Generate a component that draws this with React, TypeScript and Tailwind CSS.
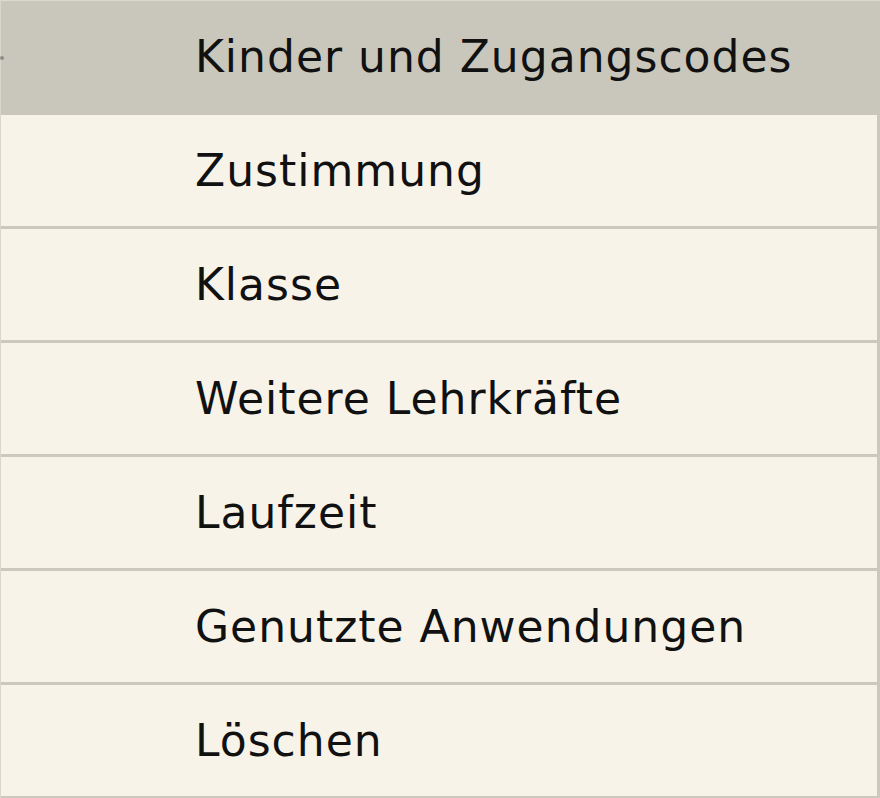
import React from 'react'

const items = [
  'Kinder und Zugangscodes',
  'Zustimmung',
  'Klasse',
  'Weitere Lehrkräfte',
  'Laufzeit',
  'Genutzte Anwendungen',
  'Löschen',
]

export default function App() {
  const active = 0
  return (
    <div className="w-[880px] h-[798px] overflow-hidden bg-[#f7f3e9] relative" style={{ fontFamily: '"DejaVu Sans", sans-serif' }}>
      <span className="absolute left-0 top-[56px] w-[4px] h-[4px] rounded-full bg-[#8f8d87]" />
      <ul className="border-l border-[#d9d6cd]">
        {items.map((label, i) => (
          <li
            key={label}
            className={
              i === active
                ? 'h-[115px] flex items-center pl-[194px] bg-[#c9c6bb] border-t border-[#dcd9d0] border-b-[3px] border-b-[#c9c6bb] text-[44px] tracking-[1px] text-[#111]'
                : 'h-[114px] flex items-center pl-[194px] bg-[#f7f3e9] border-b-[3px] border-r-[3px] border-[#ccc8be] text-[44px] tracking-[1px] text-[#111]'
            }
          >
            {label}
          </li>
        ))}
      </ul>
    </div>
  )
}
